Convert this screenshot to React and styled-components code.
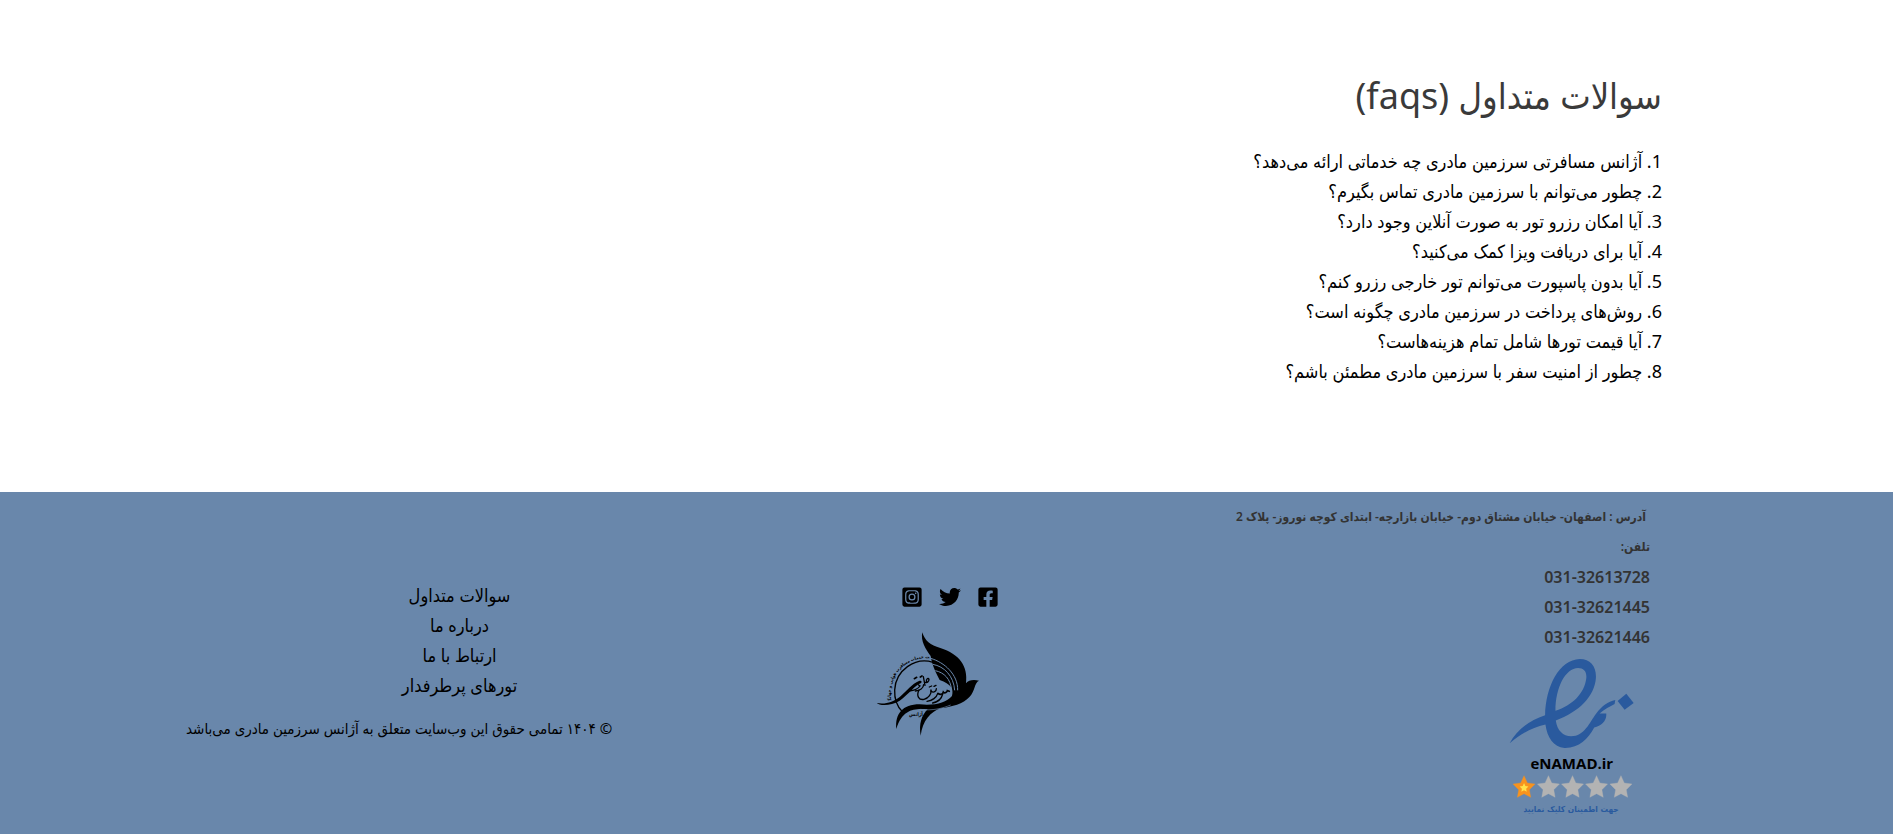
import React from "react";
import styled, { createGlobalStyle } from "styled-components";
import { FaFacebookSquare, FaTwitter, FaInstagramSquare } from "react-icons/fa";

const fontStack = `"Noto Sans", "DejaVu Sans Condensed", "DejaVu Sans", sans-serif`;

const GlobalStyle = createGlobalStyle`
  *, *::before, *::after { box-sizing: border-box; }
  body {
    margin: 0;
    background: #fff;
    color: #000;
    font-family: ${fontStack};
    font-size: 18px;
    line-height: 30px;
  }
`;

const Page = styled.div`
  display: flex;
  flex-direction: column;
  min-height: 100vh;
`;

const Main = styled.main`
  flex: 1;
  padding: 72px 231px 100px;
`;

const Title = styled.h1`
  margin: 0 0 26px;
  color: #3a3a3a;
  font-size: 36px;
  font-weight: 400;
  line-height: 48px;
`;

const QuestionList = styled.ol`
  margin: 0;
  padding: 0;
  list-style: none;
`;

const TextLink = styled.a`
  color: #000;
  text-decoration: none;
`;

const Footer = styled.footer`
  display: grid;
  grid-template-columns: 1fr 1fr 1fr;
  align-items: center;
  padding: 10px 186px 17px;
  background: #6987ab;
`;

const Contact = styled.address`
  padding-right: 57px;
  color: #333;
  font-size: 16px;
  font-style: normal;
  font-weight: 600;
`;

const ContactLine = styled.p`
  margin: 0;
  padding-right: ${(p) => (p.$inset ? 4 : 0)}px;
  font-size: 12px;
  white-space: nowrap;
`;

const Phone = styled.a`
  display: block;
  color: inherit;
  text-decoration: none;
`;

const Badge = styled.a`
  display: block;
  width: 127px;
  margin: 6px 14px 0 0;
  svg { display: block; width: 100%; }
`;

const Brand = styled.div`
  display: flex;
  flex-direction: column;
  align-items: center;
  gap: 24px;
  padding: 4px 0 0 6px;
`;

const Social = styled.nav`
  display: flex;
  gap: 16px;
  a { display: block; color: #000; }
  svg { display: block; width: 22px; height: 22px; }
`;

const Logo = styled.a`
  display: block;
  width: 104px;
  margin-right: 44px;
  svg { display: block; width: 100%; overflow: visible; }
`;

const Links = styled.div`
  display: flex;
  flex-direction: column;
  align-items: flex-end;
  gap: 13px;
  padding-top: 4px;
`;

const LinkList = styled.ul`
  width: 100%;
  margin: 0;
  padding: 0 0 0 40px;
  list-style: none;
  text-align: center;
`;

const Copyright = styled.p`
  margin: 0;
  font-size: 15px;
  white-space: nowrap;
`;

const questions = [
  "آژانس مسافرتی سرزمین مادری چه خدماتی ارائه می‌دهد؟",
  "چطور می‌توانم با سرزمین مادری تماس بگیرم؟",
  "آیا امکان رزرو تور به صورت آنلاین وجود دارد؟",
  "آیا برای دریافت ویزا کمک می‌کنید؟",
  "آیا بدون پاسپورت می‌توانم تور خارجی رزرو کنم؟",
  "روش‌های پرداخت در سرزمین مادری چگونه است؟",
  "آیا قیمت تورها شامل تمام هزینه‌هاست؟",
  "چطور از امنیت سفر با سرزمین مادری مطمئن باشم؟",
];

const phones = ["031-32613728", "031-32621445", "031-32621446"];
const pages = ["سوالات متداول", "درباره ما", "ارتباط با ما", "تورهای پرطرفدار"];

const star =
  "M0-34 L10-12 L33-9 L16 8 L20 31 L0 20 L-20 31 L-16 8 L-33-9 L-10-12Z";

function EnamadMark() {
  return (
    <svg viewBox="60 39 380 476" role="img" aria-label="eNAMAD.ir">
      <g fill="#2a5a9e">
        <path
          fillRule="evenodd"
          d="M62 294C82 256 119 226 168 210C170 124 210 44 272 42C304 42 322 65 320 99C316 154 269 201 200 226C204 256 222 273 246 273C286 273 300 233 321 205C338 183 356 170 378 165L376 177C362 184 346 193 331 205L351 205C353 227 337 242 315 247C296 282 269 309 226 308C193 306 174 276 169 238C128 247 94 267 62 294ZM199 197C251 181 285 144 291 102C294 80 284 69 267 69C228 70 199 128 199 197Z"
        />
        <path d="M385 168L411 146L433 174L406 194Z" />
      </g>
      <text x="248" y="370" textAnchor="middle" fontFamily="Open Sans" fontWeight="700" fontSize="45" direction="ltr">eNAMAD.ir</text>
      {[105, 178, 250, 322, 395].map((x, i) => (
        <path key={x} d={star} transform={`translate(${x} 425)`} fill={i ? "#b3b3b3" : "#f7931e"} stroke={i ? "#b3b3b3" : "#f7931e"} strokeLinejoin="round" />
      ))}
      <path d={star} transform="translate(105 427) scale(.4)" fill="#ffe14a" />
      <text x="246" y="501" textAnchor="middle" fontFamily="DejaVu Sans Condensed, DejaVu Sans" fontWeight="700" fontSize="25" fill="#2a5a9e">جهت اطمینان کلیک نمایید</text>
    </svg>
  );
}

function BirdMark() {
  return (
    <svg viewBox="76 184 312 312" role="img" aria-label="سرزمین مادری">
      <path d="M215 185C222 210 239 224 269 232C326 250 353 287 346 338C354 329 366 326 385 330C370 337 374 360 357 378C337 401 305 407 270 413C239 424 216 450 210 495C204 459 213 434 231 416C194 413 156 413 137 475C133 430 155 401 207 401C252 405 286 397 304 376C310 354 301 340 267 328C256 307 244 283 240 256C226 237 209 211 215 185Z" />
      <g fill="none" stroke="#6987ab" strokeWidth="3">
        <path d="M240 263C281 275 322 311 321 359" />
        <path d="M246 281C281 287 309 316 312 359" />
        <path d="M254 300C281 306 299 324 303 358" />
        <path d="M209 416C245 421 276 413 300 403" strokeWidth="2" />
      </g>
      <path d="M247 275C193 258 135 299 132 358C131 383 139 407 155 423" fill="none" stroke="#000" strokeWidth="4" />
      <path d="M78 397C104 402 128 394 148 378C168 361 184 339 205 331C212 328 216 334 210 338C192 344 174 372 147 390C122 406 87 406 78 397Z" />
      <g fill="none" stroke="#000" strokeLinecap="round" strokeWidth="4">
        <path d="M174 360C188 362 202 355 208 346L203 342" />
        <path d="M194 361C208 360 218 352 219 342" />
        <path d="M222 334C229 338 235 334 235 326C232 320 225 326 228 333M218 318L223 344" />
        <path d="M205 358C196 376 205 389 220 386C234 382 243 369 241 358" />
        <path d="M241 361C249 368 257 362 257 354M236 349L243 346M250 347L256 344" />
        <path d="M229 392C245 391 258 379 261 369M246 397C261 394 273 383 276 370" />
        <path d="M262 368C268 373 276 372 278 364C283 370 289 364 290 360L296 362" strokeWidth="5" />
        <path d="M191 324L198 320M209 319L214 316" strokeWidth="5" />
      </g>
      <defs><path id="motto" d="M122 388C109 318 163 258 237 263" /></defs>
      <text fontFamily="DejaVu Sans Condensed, DejaVu Sans" fontWeight="700" fontSize="13" textAnchor="middle">
        <textPath href="#motto" startOffset="50%">شرکت خدمات مسافرت هوایی و جهانگردی</textPath>
      </text>
      <text x="196" y="436" textAnchor="middle" fontFamily="DejaVu Sans Condensed, DejaVu Sans" fontWeight="700" fontSize="15">آژانس</text>
    </svg>
  );
}

export default function App() {
  return (
    <Page dir="rtl" lang="fa">
      <GlobalStyle />
      <Main>
        <Title>سوالات متداول (faqs)</Title>
        <QuestionList>
          {questions.map((q, i) => (
            <li key={q}><TextLink href={`#q${i + 1}`}>{`${i + 1}. ${q}`}</TextLink></li>
          ))}
        </QuestionList>
      </Main>
      <Footer>
        <Contact>
          <ContactLine $inset>آدرس : اصفهان- خیابان مشتاق دوم- خیابان بازارچه- ابتدای کوچه نوروز- پلاک 2</ContactLine>
          <ContactLine>تلفن:</ContactLine>
          {phones.map((n) => (
            <Phone key={n} href={`tel:${n}`}><bdi dir="ltr">{n}</bdi></Phone>
          ))}
          <Badge href="#enamad"><EnamadMark /></Badge>
        </Contact>
        <Brand>
          <Social aria-label="شبکه‌های اجتماعی">
            <a href="#facebook" aria-label="Facebook"><FaFacebookSquare /></a>
            <a href="#twitter" aria-label="Twitter"><FaTwitter /></a>
            <a href="#instagram" aria-label="Instagram"><FaInstagramSquare /></a>
          </Social>
          <Logo href="#home"><BirdMark /></Logo>
        </Brand>
        <Links>
          <LinkList>
            {pages.map((p) => (
              <li key={p}><TextLink href="#page">{p}</TextLink></li>
            ))}
          </LinkList>
          <Copyright>© ۱۴۰۴ تمامی حقوق این وب‌سایت متعلق به آژانس سرزمین مادری می‌باشد</Copyright>
        </Links>
      </Footer>
    </Page>
  );
}
